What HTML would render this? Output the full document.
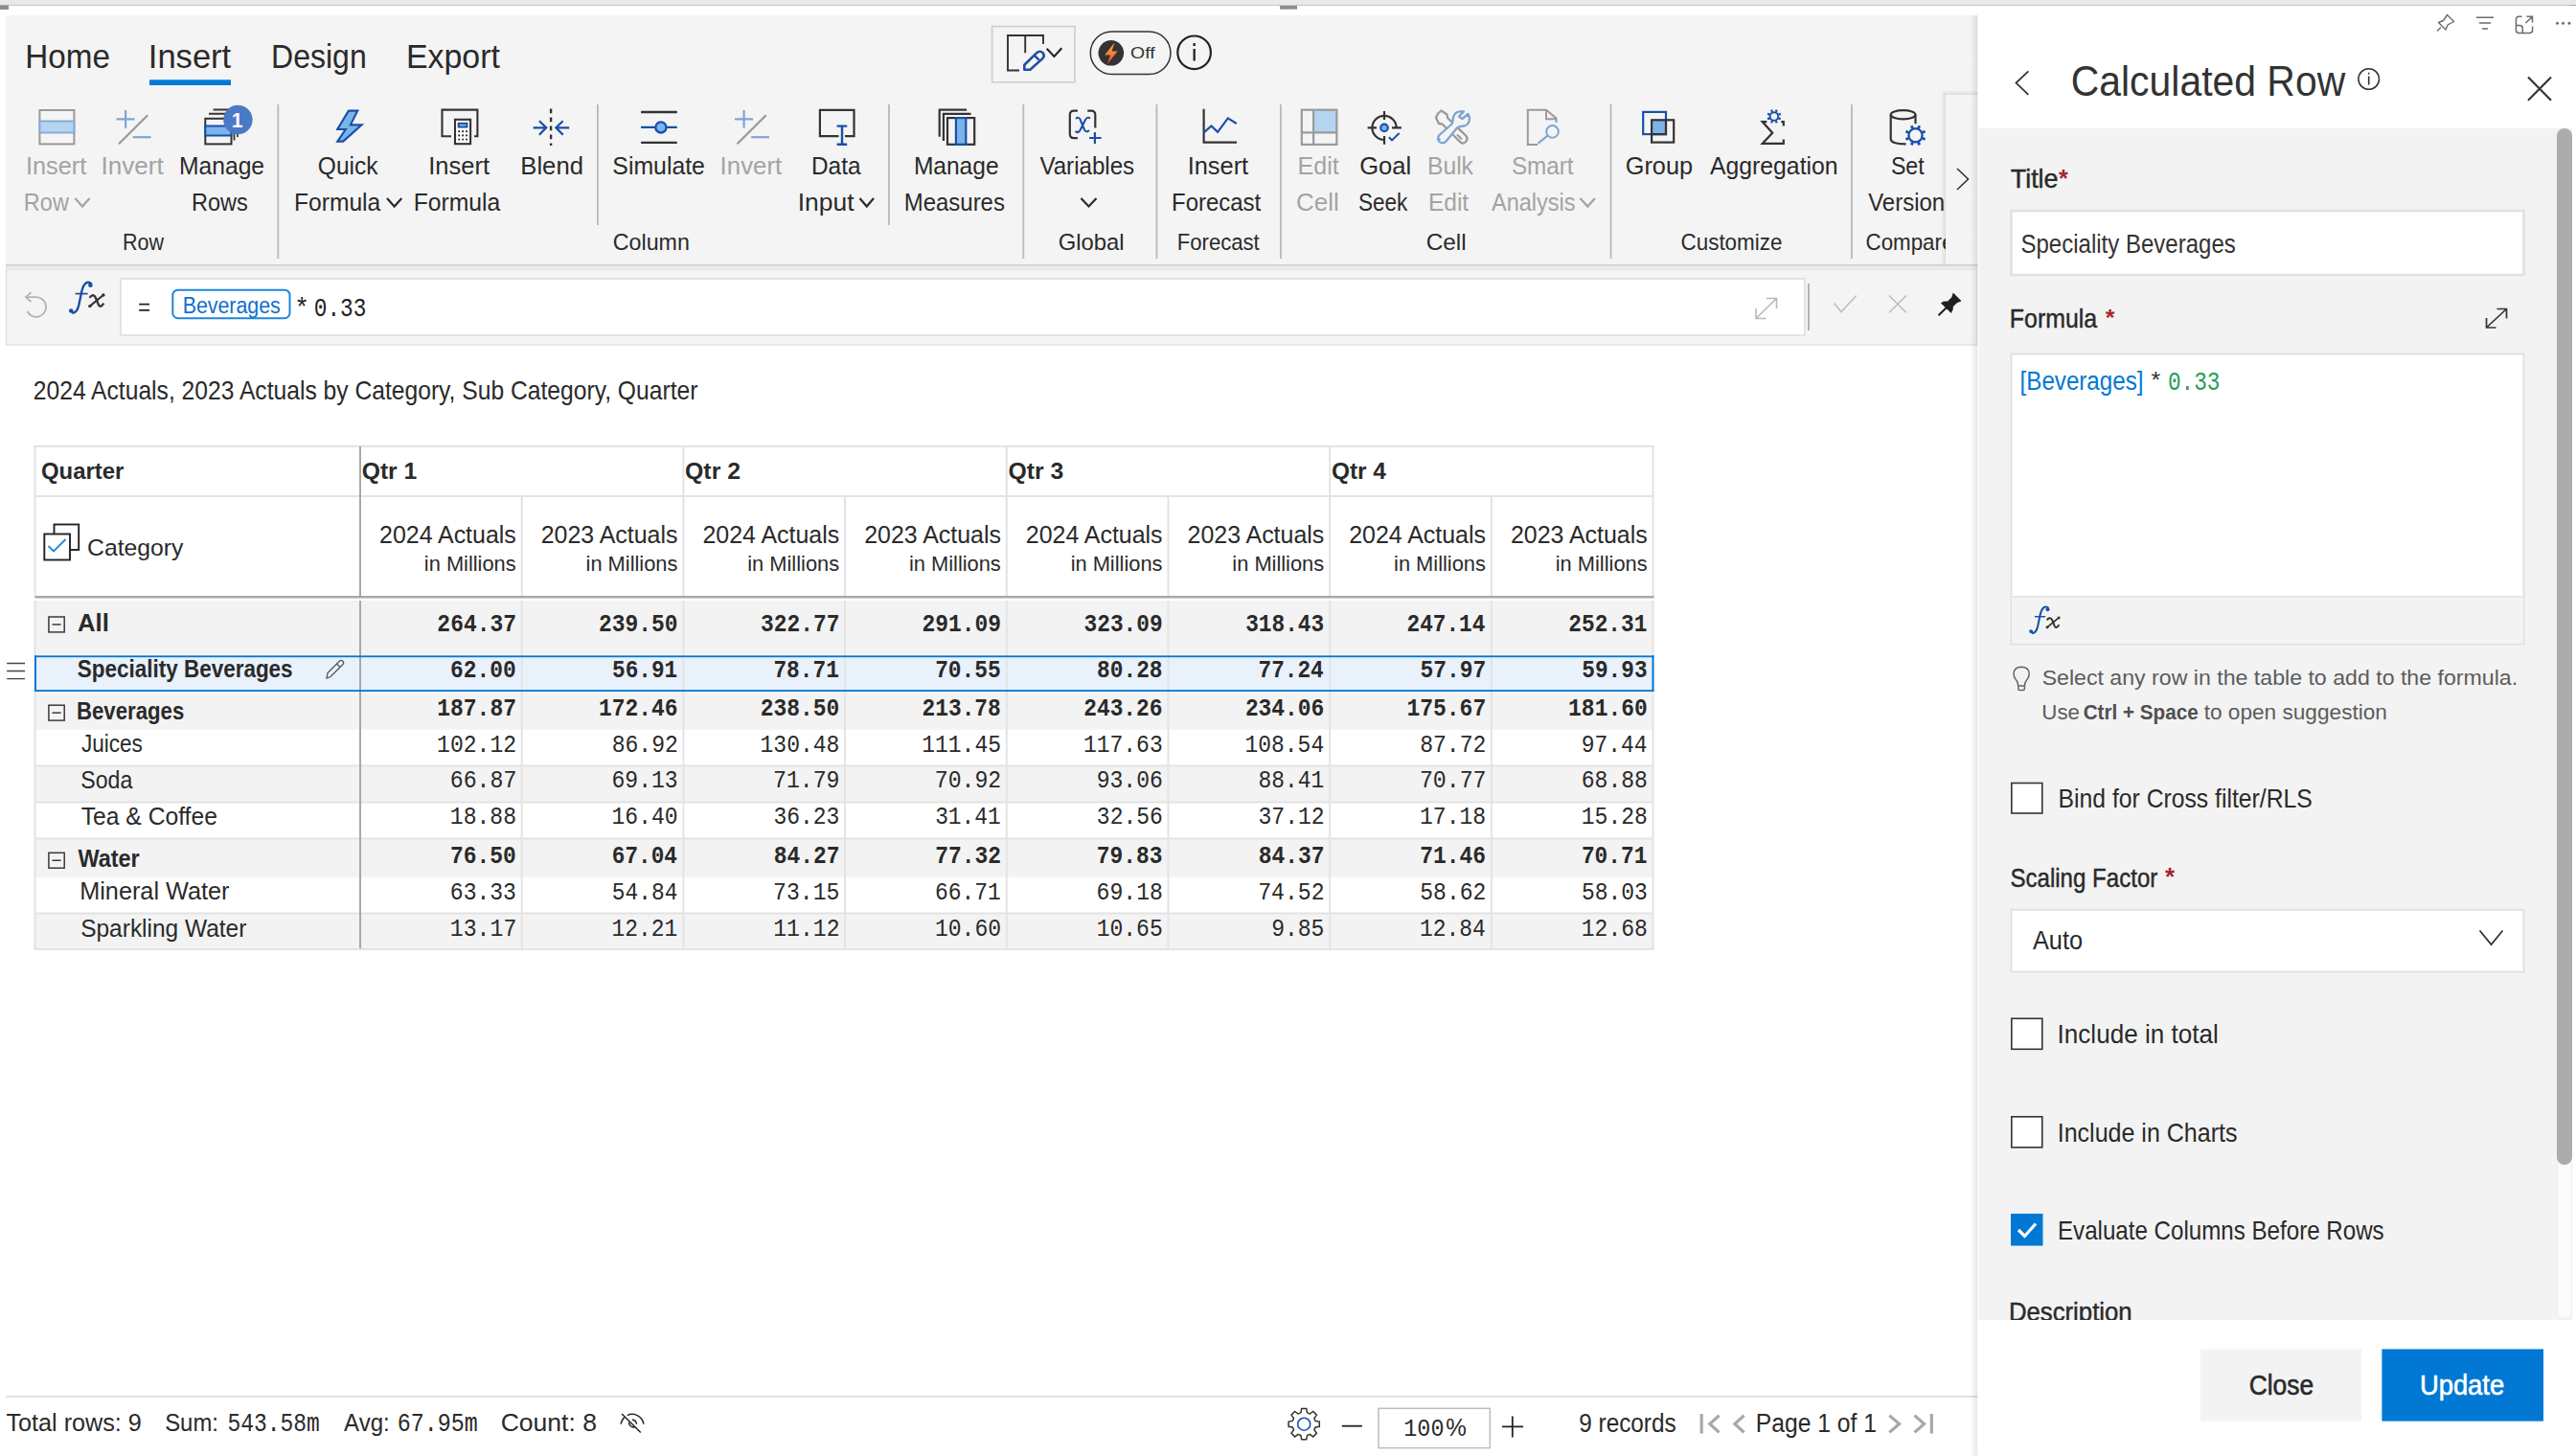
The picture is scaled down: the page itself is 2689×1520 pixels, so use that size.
<!DOCTYPE html>
<html><head><meta charset="utf-8"><title>Calculated Row</title>
<style>
html,body{margin:0;padding:0;background:#fff;overflow:hidden;}
body{width:2689px;height:1520px;font-family:"Liberation Sans",sans-serif;}
svg{display:block;position:absolute;left:0;top:0;}
text{white-space:pre;}
</style></head><body>
<svg width="2689" height="1520" viewBox="0 0 2689 1520">
<rect x="0" y="0" width="2689" height="1520" fill="#ffffff" />
<rect x="0" y="0" width="2689" height="5.5" fill="#e9e9e9" />
<rect x="0" y="5" width="2689" height="1" fill="#c6c6c6" />
<rect x="0" y="5.5" width="9" height="4.5" fill="#8c8c8c" />
<rect x="1336" y="6" width="18" height="3.7" fill="#8c8c8c" />
<rect x="2682" y="5.5" width="7" height="1.5" fill="#8c8c8c" />
<rect x="6" y="16" width="2059" height="260" fill="#f4f4f4" />
<defs><linearGradient id="shd" x1="0" y1="0" x2="0" y2="1"><stop offset="0" stop-color="#c9c9c9"/><stop offset="1" stop-color="#ececec"/></linearGradient><linearGradient id="shl" x1="1" y1="0" x2="0" y2="0"><stop offset="0" stop-color="#000" stop-opacity="0.10"/><stop offset="1" stop-color="#000" stop-opacity="0"/></linearGradient><linearGradient id="bolt" x1="0" y1="0" x2="0" y2="1"><stop offset="0" stop-color="#ffb43c"/><stop offset="1" stop-color="#f0453a"/></linearGradient></defs>
<rect x="6" y="276" width="2059" height="3" fill="url(#shd)" />
<rect x="6" y="279" width="2059" height="2" fill="#efefef" />
<text x="26.27" y="71" font-family="Liberation Sans" font-size="35.32" font-weight="400" fill="#2a2a2a" textLength="88.71" lengthAdjust="spacingAndGlyphs" >Home</text>
<text x="154.81" y="71" font-family="Liberation Sans" font-size="35.32" font-weight="400" fill="#2a2a2a" textLength="86.44" lengthAdjust="spacingAndGlyphs" >Insert</text>
<text x="283.08" y="70.7" font-family="Liberation Sans" font-size="35.32" font-weight="400" fill="#2a2a2a" textLength="99.6" lengthAdjust="spacingAndGlyphs" >Design</text>
<text x="423.92" y="70.7" font-family="Liberation Sans" font-size="35.32" font-weight="400" fill="#2a2a2a" textLength="97.93" lengthAdjust="spacingAndGlyphs" >Export</text>
<rect x="156" y="83.3" width="85" height="5.7" fill="#0078d4" />
<rect x="1035.6" y="27.6" width="86.4" height="58.2" fill="none" stroke="#cdcdcd" stroke-width="1.6"/>
<path d="M1064 73.5 H1052 V37 H1089 V46 M1070.2 37 V55.3" fill="none" stroke="#333" stroke-width="1.9" />
<path d="M1069.3 72.7 V67.8 L1082 55.4 Q1085.5 52.2 1088.6 55.2 Q1091.2 58.3 1088 61.4 L1075.3 72.7 Z" fill="#f4f4f4" stroke="#1d4f9e" stroke-width="2.6" stroke-linejoin="round"/>
<path d="M1079.8 57.8 L1084.6 62.6" fill="none" stroke="#1d4f9e" stroke-width="2.4" />
<path d="M1092.7 50.8 L1100.4 58.9 L1108.3 50.3" fill="none" stroke="#262626" stroke-width="2.2" />
<rect x="1138.3" y="33" width="83.6" height="44.5" fill="none" rx="22.2" stroke="#333" stroke-width="1.5"/>
<circle cx="1159.8" cy="55.3" r="13.3" fill="#333" />
<path d="M1163.5 44.5 L1153 57.5 L1159 57.5 L1156 67 L1166.5 53.5 L1160.5 53.5 Z" fill="url(#bolt)" />
<text x="1180.09" y="60.9" font-family="Liberation Sans" font-size="15.99" font-weight="400" fill="#333" textLength="25.58" lengthAdjust="spacingAndGlyphs" >Off</text>
<circle cx="1246.6" cy="54.8" r="17.3" fill="none" stroke="#222" stroke-width="2.2" />
<rect x="1245.5" y="45" width="2.3" height="3" fill="#222" />
<rect x="1245.5" y="51" width="2.3" height="12.5" fill="#222" />
<rect x="289.4" y="109" width="1.8" height="161" fill="#b9b9b9" />
<rect x="623" y="109" width="1.8" height="126" fill="#b9b9b9" />
<rect x="927" y="109" width="1.8" height="126" fill="#b9b9b9" />
<rect x="1067.4" y="109" width="1.8" height="161" fill="#b9b9b9" />
<rect x="1206.5" y="109" width="1.8" height="161" fill="#b9b9b9" />
<rect x="1336" y="109" width="1.8" height="161" fill="#b9b9b9" />
<rect x="1680.6" y="109" width="1.8" height="161" fill="#b9b9b9" />
<rect x="1932" y="109" width="1.8" height="161" fill="#b9b9b9" />
<text x="26.97" y="181.8" font-family="Liberation Sans" font-size="26.45" font-weight="400" fill="#a3a3a3" textLength="63.22" lengthAdjust="spacingAndGlyphs" >Insert</text>
<text x="24.87" y="219.7" font-family="Liberation Sans" font-size="26.45" font-weight="400" fill="#a3a3a3" textLength="47.07" lengthAdjust="spacingAndGlyphs" >Row</text>
<text x="105.59" y="181.8" font-family="Liberation Sans" font-size="26.45" font-weight="400" fill="#a3a3a3" textLength="65.2" lengthAdjust="spacingAndGlyphs" >Invert</text>
<text x="186.98" y="181.8" font-family="Liberation Sans" font-size="26.45" font-weight="400" fill="#2a2a2a" textLength="89.12" lengthAdjust="spacingAndGlyphs" >Manage</text>
<text x="200.07" y="219.7" font-family="Liberation Sans" font-size="26.45" font-weight="400" fill="#2a2a2a" textLength="58.78" lengthAdjust="spacingAndGlyphs" >Rows</text>
<text x="331.84" y="181.8" font-family="Liberation Sans" font-size="26.45" font-weight="400" fill="#2a2a2a" textLength="62.73" lengthAdjust="spacingAndGlyphs" >Quick</text>
<text x="306.98" y="219.7" font-family="Liberation Sans" font-size="26.45" font-weight="400" fill="#2a2a2a" textLength="90.32" lengthAdjust="spacingAndGlyphs" >Formula</text>
<text x="447.25" y="181.8" font-family="Liberation Sans" font-size="26.45" font-weight="400" fill="#2a2a2a" textLength="63.74" lengthAdjust="spacingAndGlyphs" >Insert</text>
<text x="431.67" y="219.7" font-family="Liberation Sans" font-size="26.45" font-weight="400" fill="#2a2a2a" textLength="90.63" lengthAdjust="spacingAndGlyphs" >Formula</text>
<text x="543.29" y="181.8" font-family="Liberation Sans" font-size="26.45" font-weight="400" fill="#2a2a2a" textLength="65.66" lengthAdjust="spacingAndGlyphs" >Blend</text>
<text x="639.37" y="181.8" font-family="Liberation Sans" font-size="26.45" font-weight="400" fill="#2a2a2a" textLength="96.53" lengthAdjust="spacingAndGlyphs" >Simulate</text>
<text x="751.62" y="181.8" font-family="Liberation Sans" font-size="26.45" font-weight="400" fill="#a3a3a3" textLength="64.57" lengthAdjust="spacingAndGlyphs" >Invert</text>
<text x="847" y="181.8" font-family="Liberation Sans" font-size="26.45" font-weight="400" fill="#2a2a2a" textLength="51.5" lengthAdjust="spacingAndGlyphs" >Data</text>
<text x="832.76" y="219.7" font-family="Liberation Sans" font-size="26.45" font-weight="400" fill="#2a2a2a" textLength="58.73" lengthAdjust="spacingAndGlyphs" >Input</text>
<text x="953.89" y="181.8" font-family="Liberation Sans" font-size="26.45" font-weight="400" fill="#2a2a2a" textLength="88.7" lengthAdjust="spacingAndGlyphs" >Manage</text>
<text x="943.84" y="219.7" font-family="Liberation Sans" font-size="26.45" font-weight="400" fill="#2a2a2a" textLength="105.03" lengthAdjust="spacingAndGlyphs" >Measures</text>
<text x="1085.4" y="181.8" font-family="Liberation Sans" font-size="26.45" font-weight="400" fill="#2a2a2a" textLength="98.76" lengthAdjust="spacingAndGlyphs" >Variables</text>
<text x="1239.66" y="181.8" font-family="Liberation Sans" font-size="26.45" font-weight="400" fill="#2a2a2a" textLength="63.53" lengthAdjust="spacingAndGlyphs" >Insert</text>
<text x="1223.04" y="219.7" font-family="Liberation Sans" font-size="26.45" font-weight="400" fill="#2a2a2a" textLength="93.14" lengthAdjust="spacingAndGlyphs" >Forecast</text>
<text x="1354.55" y="181.8" font-family="Liberation Sans" font-size="26.45" font-weight="400" fill="#a3a3a3" textLength="43.14" lengthAdjust="spacingAndGlyphs" >Edit</text>
<text x="1353.08" y="219.7" font-family="Liberation Sans" font-size="26.45" font-weight="400" fill="#a3a3a3" textLength="44.65" lengthAdjust="spacingAndGlyphs" >Cell</text>
<text x="1419.21" y="181.8" font-family="Liberation Sans" font-size="26.45" font-weight="400" fill="#2a2a2a" textLength="54" lengthAdjust="spacingAndGlyphs" >Goal</text>
<text x="1417.98" y="219.7" font-family="Liberation Sans" font-size="26.45" font-weight="400" fill="#2a2a2a" textLength="51.29" lengthAdjust="spacingAndGlyphs" >Seek</text>
<text x="1489.98" y="181.8" font-family="Liberation Sans" font-size="26.45" font-weight="400" fill="#a3a3a3" textLength="47.99" lengthAdjust="spacingAndGlyphs" >Bulk</text>
<text x="1490.99" y="219.7" font-family="Liberation Sans" font-size="26.45" font-weight="400" fill="#a3a3a3" textLength="42.19" lengthAdjust="spacingAndGlyphs" >Edit</text>
<text x="1577.9" y="181.8" font-family="Liberation Sans" font-size="26.45" font-weight="400" fill="#a3a3a3" textLength="64.68" lengthAdjust="spacingAndGlyphs" >Smart</text>
<text x="1556.95" y="219.7" font-family="Liberation Sans" font-size="26.45" font-weight="400" fill="#a3a3a3" textLength="87.7" lengthAdjust="spacingAndGlyphs" >Analysis</text>
<text x="1696.73" y="181.8" font-family="Liberation Sans" font-size="26.45" font-weight="400" fill="#2a2a2a" textLength="70.34" lengthAdjust="spacingAndGlyphs" >Group</text>
<text x="1784.95" y="181.8" font-family="Liberation Sans" font-size="26.45" font-weight="400" fill="#2a2a2a" textLength="133.66" lengthAdjust="spacingAndGlyphs" >Aggregation</text>
<text x="1973.95" y="181.8" font-family="Liberation Sans" font-size="26.45" font-weight="400" fill="#2a2a2a" textLength="34.72" lengthAdjust="spacingAndGlyphs" >Set</text>
<clipPath id="rclip"><rect x="6" y="16" width="2025" height="260"/></clipPath>
<g clip-path="url(#rclip)">
<text x="1950.2" y="219.7" font-family="Liberation Sans" font-size="26.45" font-weight="400" fill="#2a2a2a" textLength="79.93" lengthAdjust="spacingAndGlyphs" >Version</text>
<text x="1947.57" y="261" font-family="Liberation Sans" font-size="23.84" font-weight="400" fill="#2a2a2a" textLength="79.4" lengthAdjust="spacingAndGlyphs" >Compar</text>
<text x="2027.13" y="261" font-family="Liberation Sans" font-size="23.84" font-weight="400" fill="#2a2a2a" textLength="13.99" lengthAdjust="spacingAndGlyphs" >e</text>
</g>
<path d="M78.5 207 L86 215.5 L93.5 207" fill="none" stroke="#a3a3a3" stroke-width="2.2" />
<path d="M404 207 L411.65 215.5 L419.3 207" fill="none" stroke="#2a2a2a" stroke-width="2.2" />
<path d="M897.5 207 L904.75 215.5 L912 207" fill="none" stroke="#2a2a2a" stroke-width="2.2" />
<path d="M1128.5 207 L1136.5 215.5 L1144.5 207" fill="none" stroke="#2a2a2a" stroke-width="2.2" />
<path d="M1649.5 207 L1657.25 215.5 L1665 207" fill="none" stroke="#a3a3a3" stroke-width="2.2" />
<text x="128.04" y="261" font-family="Liberation Sans" font-size="23.84" font-weight="400" fill="#2a2a2a" textLength="42.91" lengthAdjust="spacingAndGlyphs" >Row</text>
<text x="639.82" y="261" font-family="Liberation Sans" font-size="23.84" font-weight="400" fill="#2a2a2a" textLength="79.99" lengthAdjust="spacingAndGlyphs" >Column</text>
<text x="1104.8" y="261" font-family="Liberation Sans" font-size="23.84" font-weight="400" fill="#2a2a2a" textLength="68.79" lengthAdjust="spacingAndGlyphs" >Global</text>
<text x="1228.79" y="261" font-family="Liberation Sans" font-size="23.84" font-weight="400" fill="#2a2a2a" textLength="85.97" lengthAdjust="spacingAndGlyphs" >Forecast</text>
<text x="1488.77" y="261" font-family="Liberation Sans" font-size="23.84" font-weight="400" fill="#2a2a2a" textLength="41.86" lengthAdjust="spacingAndGlyphs" >Cell</text>
<text x="1754.56" y="261" font-family="Liberation Sans" font-size="23.84" font-weight="400" fill="#2a2a2a" textLength="105.83" lengthAdjust="spacingAndGlyphs" >Customize</text>
<rect x="2026" y="99" width="5" height="177" fill="url(#shl)" />
<linearGradient id="sht" x1="0" y1="1" x2="0" y2="0"><stop offset="0" stop-color="#000" stop-opacity="0.10"/><stop offset="1" stop-color="#000" stop-opacity="0"/></linearGradient>
<rect x="2028" y="94" width="37" height="5" fill="url(#sht)" />
<rect x="2031" y="99" width="34" height="177" fill="#f4f4f4" />
<path d="M2043 176 L2054.5 187 L2043 198" fill="none" stroke="#333" stroke-width="1.6" />
<rect x="6.5" y="281" width="2057.5" height="79" fill="#f4f4f4" stroke="#e2e2e2" stroke-width="1.5"/>
<rect x="126" y="291" width="1758" height="59" fill="#ffffff" stroke="#e3e3e3" stroke-width="2"/>
<rect x="1887" y="296" width="2" height="49" fill="#b3b3b3" />
<text x="34.77" y="417" font-family="Liberation Sans" font-size="27.91" font-weight="400" fill="#2a2a2a" textLength="693.63" lengthAdjust="spacingAndGlyphs" >2024 Actuals, 2023 Actuals by Category, Sub Category, Quarter</text>
<rect x="36.5" y="466" width="1690" height="157" fill="#ffffff" />
<rect x="35.5" y="465" width="1691" height="2" fill="#e3e3e3" />
<rect x="35.5" y="465" width="2" height="159" fill="#e3e3e3" />
<rect x="1724.5" y="465" width="2" height="159" fill="#e3e3e3" />
<rect x="36.5" y="517" width="1690" height="2" fill="#e3e3e3" />
<rect x="36.5" y="622" width="1690" height="2.5" fill="#a8a8a8" />
<rect x="375" y="466" width="2" height="158" fill="#a8a8a8" />
<rect x="543.7" y="518" width="2" height="104" fill="#e3e3e3" />
<rect x="712.4" y="466" width="2" height="156" fill="#e3e3e3" />
<rect x="881.1" y="518" width="2" height="104" fill="#e3e3e3" />
<rect x="1049.8" y="466" width="2" height="156" fill="#e3e3e3" />
<rect x="1218.5" y="518" width="2" height="104" fill="#e3e3e3" />
<rect x="1387.2" y="466" width="2" height="156" fill="#e3e3e3" />
<rect x="1555.9" y="518" width="2" height="104" fill="#e3e3e3" />
<rect x="35.5" y="627" width="1691" height="365" fill="#e3e3e3" />
<rect x="37.5" y="627" width="1687" height="57.4" fill="#f3f3f3" />
<rect x="37.5" y="684.4" width="1687" height="37.6" fill="#e9f1fb" />
<rect x="37.5" y="722" width="1687" height="39.5" fill="#f3f3f3" />
<rect x="37.5" y="761.5" width="1687" height="37" fill="#ffffff" />
<rect x="37.5" y="800.5" width="1687" height="36" fill="#f3f3f3" />
<rect x="37.5" y="838.5" width="1687" height="36" fill="#ffffff" />
<rect x="37.5" y="876.5" width="1687" height="39" fill="#f3f3f3" />
<rect x="37.5" y="915.5" width="1687" height="37" fill="#ffffff" />
<rect x="37.5" y="954.5" width="1687" height="35.5" fill="#f3f3f3" />
<rect x="543.7" y="627" width="2" height="363" fill="#e4e4e4" />
<rect x="712.4" y="627" width="2" height="363" fill="#e4e4e4" />
<rect x="881.1" y="627" width="2" height="363" fill="#e4e4e4" />
<rect x="1049.8" y="627" width="2" height="363" fill="#e4e4e4" />
<rect x="1218.5" y="627" width="2" height="363" fill="#e4e4e4" />
<rect x="1387.2" y="627" width="2" height="363" fill="#e4e4e4" />
<rect x="1555.9" y="627" width="2" height="363" fill="#e4e4e4" />
<rect x="375" y="627" width="2" height="363" fill="#a8a8a8" />
<rect x="36" y="684.4" width="1690.5" height="1.8" fill="#0078d4" />
<rect x="36" y="720.2" width="1690.5" height="1.8" fill="#0078d4" />
<rect x="36" y="684.4" width="2" height="37.6" fill="#0078d4" />
<rect x="1724.5" y="684.4" width="2" height="37.6" fill="#0078d4" />
<text x="43.02" y="500" font-family="Liberation Sans" font-size="24.71" font-weight="700" fill="#2a2a2a" textLength="86.34" lengthAdjust="spacingAndGlyphs" >Quarter</text>
<text x="91.04" y="579.6" font-family="Liberation Sans" font-size="24.71" font-weight="400" fill="#2a2a2a" textLength="100.4" lengthAdjust="spacingAndGlyphs" >Category</text>
<text x="377.69" y="500" font-family="Liberation Sans" font-size="24.71" font-weight="700" fill="#2a2a2a" textLength="57.6" lengthAdjust="spacingAndGlyphs" >Qtr 1</text>
<text x="715.08" y="500" font-family="Liberation Sans" font-size="24.71" font-weight="700" fill="#2a2a2a" textLength="57.91" lengthAdjust="spacingAndGlyphs" >Qtr 2</text>
<text x="1052.48" y="500" font-family="Liberation Sans" font-size="24.71" font-weight="700" fill="#2a2a2a" textLength="57.81" lengthAdjust="spacingAndGlyphs" >Qtr 3</text>
<text x="1389.9" y="500" font-family="Liberation Sans" font-size="24.71" font-weight="700" fill="#2a2a2a" textLength="57.03" lengthAdjust="spacingAndGlyphs" >Qtr 4</text>
<text x="396.06" y="566.5" font-family="Liberation Sans" font-size="25.58" font-weight="400" fill="#2a2a2a" textLength="142.73" lengthAdjust="spacingAndGlyphs" >2024 Actuals</text>
<text x="442.84" y="595.8" font-family="Liberation Sans" font-size="22.67" font-weight="400" fill="#2a2a2a" textLength="95.85" lengthAdjust="spacingAndGlyphs" >in Millions</text>
<text x="564.76" y="566.5" font-family="Liberation Sans" font-size="25.58" font-weight="400" fill="#2a2a2a" textLength="142.73" lengthAdjust="spacingAndGlyphs" >2023 Actuals</text>
<text x="611.54" y="595.8" font-family="Liberation Sans" font-size="22.67" font-weight="400" fill="#2a2a2a" textLength="95.85" lengthAdjust="spacingAndGlyphs" >in Millions</text>
<text x="733.46" y="566.5" font-family="Liberation Sans" font-size="25.58" font-weight="400" fill="#2a2a2a" textLength="142.73" lengthAdjust="spacingAndGlyphs" >2024 Actuals</text>
<text x="780.24" y="595.8" font-family="Liberation Sans" font-size="22.67" font-weight="400" fill="#2a2a2a" textLength="95.85" lengthAdjust="spacingAndGlyphs" >in Millions</text>
<text x="902.16" y="566.5" font-family="Liberation Sans" font-size="25.58" font-weight="400" fill="#2a2a2a" textLength="142.73" lengthAdjust="spacingAndGlyphs" >2023 Actuals</text>
<text x="948.94" y="595.8" font-family="Liberation Sans" font-size="22.67" font-weight="400" fill="#2a2a2a" textLength="95.85" lengthAdjust="spacingAndGlyphs" >in Millions</text>
<text x="1070.86" y="566.5" font-family="Liberation Sans" font-size="25.58" font-weight="400" fill="#2a2a2a" textLength="142.73" lengthAdjust="spacingAndGlyphs" >2024 Actuals</text>
<text x="1117.64" y="595.8" font-family="Liberation Sans" font-size="22.67" font-weight="400" fill="#2a2a2a" textLength="95.85" lengthAdjust="spacingAndGlyphs" >in Millions</text>
<text x="1239.56" y="566.5" font-family="Liberation Sans" font-size="25.58" font-weight="400" fill="#2a2a2a" textLength="142.73" lengthAdjust="spacingAndGlyphs" >2023 Actuals</text>
<text x="1286.34" y="595.8" font-family="Liberation Sans" font-size="22.67" font-weight="400" fill="#2a2a2a" textLength="95.85" lengthAdjust="spacingAndGlyphs" >in Millions</text>
<text x="1408.26" y="566.5" font-family="Liberation Sans" font-size="25.58" font-weight="400" fill="#2a2a2a" textLength="142.73" lengthAdjust="spacingAndGlyphs" >2024 Actuals</text>
<text x="1455.04" y="595.8" font-family="Liberation Sans" font-size="22.67" font-weight="400" fill="#2a2a2a" textLength="95.85" lengthAdjust="spacingAndGlyphs" >in Millions</text>
<text x="1576.96" y="566.5" font-family="Liberation Sans" font-size="25.58" font-weight="400" fill="#2a2a2a" textLength="142.73" lengthAdjust="spacingAndGlyphs" >2023 Actuals</text>
<text x="1623.74" y="595.8" font-family="Liberation Sans" font-size="22.67" font-weight="400" fill="#2a2a2a" textLength="95.85" lengthAdjust="spacingAndGlyphs" >in Millions</text>
<text x="80.96" y="659" font-family="Liberation Sans" font-size="26.16" font-weight="700" fill="#2a2a2a" textLength="32.86" lengthAdjust="spacingAndGlyphs" >All</text>
<text x="456.37" y="658.6" font-family="Liberation Mono" font-size="26.56" font-weight="700" fill="#2a2a2a" textLength="82.66" lengthAdjust="spacingAndGlyphs" >264.37</text>
<text x="625.07" y="658.6" font-family="Liberation Mono" font-size="26.56" font-weight="700" fill="#2a2a2a" textLength="82.44" lengthAdjust="spacingAndGlyphs" >239.50</text>
<text x="794.11" y="658.6" font-family="Liberation Mono" font-size="26.56" font-weight="700" fill="#2a2a2a" textLength="82.32" lengthAdjust="spacingAndGlyphs" >322.77</text>
<text x="962.47" y="658.6" font-family="Liberation Mono" font-size="26.56" font-weight="700" fill="#2a2a2a" textLength="82.5" lengthAdjust="spacingAndGlyphs" >291.09</text>
<text x="1131.51" y="658.6" font-family="Liberation Mono" font-size="26.56" font-weight="700" fill="#2a2a2a" textLength="82.16" lengthAdjust="spacingAndGlyphs" >323.09</text>
<text x="1300.22" y="658.6" font-family="Liberation Mono" font-size="26.56" font-weight="700" fill="#2a2a2a" textLength="81.94" lengthAdjust="spacingAndGlyphs" >318.43</text>
<text x="1468.59" y="658.6" font-family="Liberation Mono" font-size="26.56" font-weight="700" fill="#2a2a2a" textLength="81.79" lengthAdjust="spacingAndGlyphs" >247.14</text>
<text x="1637.28" y="658.6" font-family="Liberation Mono" font-size="26.56" font-weight="700" fill="#2a2a2a" textLength="82.09" lengthAdjust="spacingAndGlyphs" >252.31</text>
<text x="80.75" y="707" font-family="Liberation Sans" font-size="25.29" font-weight="700" fill="#2a2a2a" textLength="224.87" lengthAdjust="spacingAndGlyphs" >Speciality Beverages</text>
<text x="470.1" y="707" font-family="Liberation Mono" font-size="26.56" font-weight="700" fill="#2a2a2a" textLength="68.72" lengthAdjust="spacingAndGlyphs" >62.00</text>
<text x="639.05" y="707" font-family="Liberation Mono" font-size="26.56" font-weight="700" fill="#2a2a2a" textLength="68.12" lengthAdjust="spacingAndGlyphs" >56.91</text>
<text x="807.44" y="707" font-family="Liberation Mono" font-size="26.56" font-weight="700" fill="#2a2a2a" textLength="68.43" lengthAdjust="spacingAndGlyphs" >78.71</text>
<text x="976.14" y="707" font-family="Liberation Mono" font-size="26.56" font-weight="700" fill="#2a2a2a" textLength="68.65" lengthAdjust="spacingAndGlyphs" >70.55</text>
<text x="1145.09" y="707" font-family="Liberation Mono" font-size="26.56" font-weight="700" fill="#2a2a2a" textLength="68.43" lengthAdjust="spacingAndGlyphs" >80.28</text>
<text x="1313.55" y="707" font-family="Liberation Mono" font-size="26.56" font-weight="700" fill="#2a2a2a" textLength="68.13" lengthAdjust="spacingAndGlyphs" >77.24</text>
<text x="1482.54" y="707" font-family="Liberation Mono" font-size="26.56" font-weight="700" fill="#2a2a2a" textLength="68.69" lengthAdjust="spacingAndGlyphs" >57.97</text>
<text x="1651.24" y="707" font-family="Liberation Mono" font-size="26.56" font-weight="700" fill="#2a2a2a" textLength="68.31" lengthAdjust="spacingAndGlyphs" >59.93</text>
<text x="79.91" y="751" font-family="Liberation Sans" font-size="25.58" font-weight="700" fill="#2a2a2a" textLength="112.4" lengthAdjust="spacingAndGlyphs" >Beverages</text>
<text x="456.2" y="746.8" font-family="Liberation Mono" font-size="26.56" font-weight="700" fill="#2a2a2a" textLength="82.84" lengthAdjust="spacingAndGlyphs" >187.87</text>
<text x="624.9" y="746.8" font-family="Liberation Mono" font-size="26.56" font-weight="700" fill="#2a2a2a" textLength="82.57" lengthAdjust="spacingAndGlyphs" >172.46</text>
<text x="793.77" y="746.8" font-family="Liberation Mono" font-size="26.56" font-weight="700" fill="#2a2a2a" textLength="82.44" lengthAdjust="spacingAndGlyphs" >238.50</text>
<text x="962.48" y="746.8" font-family="Liberation Mono" font-size="26.56" font-weight="700" fill="#2a2a2a" textLength="82.34" lengthAdjust="spacingAndGlyphs" >213.78</text>
<text x="1131.18" y="746.8" font-family="Liberation Mono" font-size="26.56" font-weight="700" fill="#2a2a2a" textLength="82.4" lengthAdjust="spacingAndGlyphs" >243.26</text>
<text x="1299.88" y="746.8" font-family="Liberation Mono" font-size="26.56" font-weight="700" fill="#2a2a2a" textLength="82.4" lengthAdjust="spacingAndGlyphs" >234.06</text>
<text x="1468.4" y="746.8" font-family="Liberation Mono" font-size="26.56" font-weight="700" fill="#2a2a2a" textLength="82.84" lengthAdjust="spacingAndGlyphs" >175.67</text>
<text x="1637.1" y="746.8" font-family="Liberation Mono" font-size="26.56" font-weight="700" fill="#2a2a2a" textLength="82.62" lengthAdjust="spacingAndGlyphs" >181.60</text>
<text x="84.95" y="785" font-family="Liberation Sans" font-size="25.29" font-weight="400" fill="#2a2a2a" textLength="63.87" lengthAdjust="spacingAndGlyphs" >Juices</text>
<text x="456.08" y="785.3" font-family="Liberation Mono" font-size="26.56" font-weight="400" fill="#2a2a2a" textLength="83.05" lengthAdjust="spacingAndGlyphs" >102.12</text>
<text x="638.7" y="785.3" font-family="Liberation Mono" font-size="26.56" font-weight="400" fill="#2a2a2a" textLength="69.13" lengthAdjust="spacingAndGlyphs" >86.92</text>
<text x="793.49" y="785.3" font-family="Liberation Mono" font-size="26.56" font-weight="400" fill="#2a2a2a" textLength="82.93" lengthAdjust="spacingAndGlyphs" >130.48</text>
<text x="962.19" y="785.3" font-family="Liberation Mono" font-size="26.56" font-weight="400" fill="#2a2a2a" textLength="82.87" lengthAdjust="spacingAndGlyphs" >111.45</text>
<text x="1130.89" y="785.3" font-family="Liberation Mono" font-size="26.56" font-weight="400" fill="#2a2a2a" textLength="82.87" lengthAdjust="spacingAndGlyphs" >117.63</text>
<text x="1299.59" y="785.3" font-family="Liberation Mono" font-size="26.56" font-weight="400" fill="#2a2a2a" textLength="82.57" lengthAdjust="spacingAndGlyphs" >108.54</text>
<text x="1482.2" y="785.3" font-family="Liberation Mono" font-size="26.56" font-weight="400" fill="#2a2a2a" textLength="69.13" lengthAdjust="spacingAndGlyphs" >87.72</text>
<text x="1650.82" y="785.3" font-family="Liberation Mono" font-size="26.56" font-weight="400" fill="#2a2a2a" textLength="68.74" lengthAdjust="spacingAndGlyphs" >97.44</text>
<text x="84.25" y="823.2" font-family="Liberation Sans" font-size="25.29" font-weight="400" fill="#2a2a2a" textLength="54.05" lengthAdjust="spacingAndGlyphs" >Soda</text>
<text x="469.79" y="822" font-family="Liberation Mono" font-size="26.56" font-weight="400" fill="#2a2a2a" textLength="69.52" lengthAdjust="spacingAndGlyphs" >66.87</text>
<text x="638.5" y="822" font-family="Liberation Mono" font-size="26.56" font-weight="400" fill="#2a2a2a" textLength="69.16" lengthAdjust="spacingAndGlyphs" >69.13</text>
<text x="807.12" y="822" font-family="Liberation Mono" font-size="26.56" font-weight="400" fill="#2a2a2a" textLength="69.39" lengthAdjust="spacingAndGlyphs" >71.79</text>
<text x="975.81" y="822" font-family="Liberation Mono" font-size="26.56" font-weight="400" fill="#2a2a2a" textLength="69.42" lengthAdjust="spacingAndGlyphs" >70.92</text>
<text x="1144.71" y="822" font-family="Liberation Mono" font-size="26.56" font-weight="400" fill="#2a2a2a" textLength="69.08" lengthAdjust="spacingAndGlyphs" >93.06</text>
<text x="1313.52" y="822" font-family="Liberation Mono" font-size="26.56" font-weight="400" fill="#2a2a2a" textLength="68.59" lengthAdjust="spacingAndGlyphs" >88.41</text>
<text x="1481.91" y="822" font-family="Liberation Mono" font-size="26.56" font-weight="400" fill="#2a2a2a" textLength="69.6" lengthAdjust="spacingAndGlyphs" >70.77</text>
<text x="1650.7" y="822" font-family="Liberation Mono" font-size="26.56" font-weight="400" fill="#2a2a2a" textLength="69.22" lengthAdjust="spacingAndGlyphs" >68.88</text>
<text x="84.76" y="861.4" font-family="Liberation Sans" font-size="25.29" font-weight="400" fill="#2a2a2a" textLength="142.11" lengthAdjust="spacingAndGlyphs" >Tea &amp; Coffee</text>
<text x="469.83" y="860" font-family="Liberation Mono" font-size="26.56" font-weight="400" fill="#2a2a2a" textLength="69.19" lengthAdjust="spacingAndGlyphs" >18.88</text>
<text x="638.54" y="860" font-family="Liberation Mono" font-size="26.56" font-weight="400" fill="#2a2a2a" textLength="69.08" lengthAdjust="spacingAndGlyphs" >16.40</text>
<text x="807.46" y="860" font-family="Liberation Mono" font-size="26.56" font-weight="400" fill="#2a2a2a" textLength="68.89" lengthAdjust="spacingAndGlyphs" >36.23</text>
<text x="976.17" y="860" font-family="Liberation Mono" font-size="26.56" font-weight="400" fill="#2a2a2a" textLength="68.53" lengthAdjust="spacingAndGlyphs" >31.41</text>
<text x="1144.86" y="860" font-family="Liberation Mono" font-size="26.56" font-weight="400" fill="#2a2a2a" textLength="68.93" lengthAdjust="spacingAndGlyphs" >32.56</text>
<text x="1313.56" y="860" font-family="Liberation Mono" font-size="26.56" font-weight="400" fill="#2a2a2a" textLength="69.07" lengthAdjust="spacingAndGlyphs" >37.12</text>
<text x="1482.03" y="860" font-family="Liberation Mono" font-size="26.56" font-weight="400" fill="#2a2a2a" textLength="69.19" lengthAdjust="spacingAndGlyphs" >17.18</text>
<text x="1650.73" y="860" font-family="Liberation Mono" font-size="26.56" font-weight="400" fill="#2a2a2a" textLength="69.19" lengthAdjust="spacingAndGlyphs" >15.28</text>
<text x="81.38" y="904.7" font-family="Liberation Sans" font-size="25.29" font-weight="700" fill="#2a2a2a" textLength="64.27" lengthAdjust="spacingAndGlyphs" >Water</text>
<text x="470.03" y="900.5" font-family="Liberation Mono" font-size="26.56" font-weight="700" fill="#2a2a2a" textLength="68.79" lengthAdjust="spacingAndGlyphs" >76.50</text>
<text x="638.82" y="900.5" font-family="Liberation Mono" font-size="26.56" font-weight="700" fill="#2a2a2a" textLength="68.06" lengthAdjust="spacingAndGlyphs" >67.04</text>
<text x="807.68" y="900.5" font-family="Liberation Mono" font-size="26.56" font-weight="700" fill="#2a2a2a" textLength="68.75" lengthAdjust="spacingAndGlyphs" >84.27</text>
<text x="976.13" y="900.5" font-family="Liberation Mono" font-size="26.56" font-weight="700" fill="#2a2a2a" textLength="68.81" lengthAdjust="spacingAndGlyphs" >77.32</text>
<text x="1144.84" y="900.5" font-family="Liberation Mono" font-size="26.56" font-weight="700" fill="#2a2a2a" textLength="68.62" lengthAdjust="spacingAndGlyphs" >79.83</text>
<text x="1313.78" y="900.5" font-family="Liberation Mono" font-size="26.56" font-weight="700" fill="#2a2a2a" textLength="68.75" lengthAdjust="spacingAndGlyphs" >84.37</text>
<text x="1482.23" y="900.5" font-family="Liberation Mono" font-size="26.56" font-weight="700" fill="#2a2a2a" textLength="68.74" lengthAdjust="spacingAndGlyphs" >71.46</text>
<text x="1650.94" y="900.5" font-family="Liberation Mono" font-size="26.56" font-weight="700" fill="#2a2a2a" textLength="68.43" lengthAdjust="spacingAndGlyphs" >70.71</text>
<text x="83.24" y="939.4" font-family="Liberation Sans" font-size="25.29" font-weight="400" fill="#2a2a2a" textLength="156.18" lengthAdjust="spacingAndGlyphs" >Mineral Water</text>
<text x="469.8" y="938.8" font-family="Liberation Mono" font-size="26.56" font-weight="400" fill="#2a2a2a" textLength="69.16" lengthAdjust="spacingAndGlyphs" >63.33</text>
<text x="638.77" y="938.8" font-family="Liberation Mono" font-size="26.56" font-weight="400" fill="#2a2a2a" textLength="68.59" lengthAdjust="spacingAndGlyphs" >54.84</text>
<text x="807.12" y="938.8" font-family="Liberation Mono" font-size="26.56" font-weight="400" fill="#2a2a2a" textLength="69.25" lengthAdjust="spacingAndGlyphs" >73.15</text>
<text x="975.91" y="938.8" font-family="Liberation Mono" font-size="26.56" font-weight="400" fill="#2a2a2a" textLength="68.8" lengthAdjust="spacingAndGlyphs" >66.71</text>
<text x="1144.6" y="938.8" font-family="Liberation Mono" font-size="26.56" font-weight="400" fill="#2a2a2a" textLength="69.22" lengthAdjust="spacingAndGlyphs" >69.18</text>
<text x="1313.21" y="938.8" font-family="Liberation Mono" font-size="26.56" font-weight="400" fill="#2a2a2a" textLength="69.42" lengthAdjust="spacingAndGlyphs" >74.52</text>
<text x="1482.26" y="938.8" font-family="Liberation Mono" font-size="26.56" font-weight="400" fill="#2a2a2a" textLength="69.07" lengthAdjust="spacingAndGlyphs" >58.62</text>
<text x="1650.96" y="938.8" font-family="Liberation Mono" font-size="26.56" font-weight="400" fill="#2a2a2a" textLength="68.89" lengthAdjust="spacingAndGlyphs" >58.03</text>
<text x="84.19" y="977.6" font-family="Liberation Sans" font-size="25.29" font-weight="400" fill="#2a2a2a" textLength="173.21" lengthAdjust="spacingAndGlyphs" >Sparkling Water</text>
<text x="469.83" y="977" font-family="Liberation Mono" font-size="26.56" font-weight="400" fill="#2a2a2a" textLength="69.48" lengthAdjust="spacingAndGlyphs" >13.17</text>
<text x="638.54" y="977" font-family="Liberation Mono" font-size="26.56" font-weight="400" fill="#2a2a2a" textLength="68.76" lengthAdjust="spacingAndGlyphs" >12.21</text>
<text x="807.23" y="977" font-family="Liberation Mono" font-size="26.56" font-weight="400" fill="#2a2a2a" textLength="69.3" lengthAdjust="spacingAndGlyphs" >11.12</text>
<text x="975.94" y="977" font-family="Liberation Mono" font-size="26.56" font-weight="400" fill="#2a2a2a" textLength="69.08" lengthAdjust="spacingAndGlyphs" >10.60</text>
<text x="1144.64" y="977" font-family="Liberation Mono" font-size="26.56" font-weight="400" fill="#2a2a2a" textLength="69.13" lengthAdjust="spacingAndGlyphs" >10.65</text>
<text x="1327.16" y="977" font-family="Liberation Mono" font-size="26.56" font-weight="400" fill="#2a2a2a" textLength="55.3" lengthAdjust="spacingAndGlyphs" >9.85</text>
<text x="1482.04" y="977" font-family="Liberation Mono" font-size="26.56" font-weight="400" fill="#2a2a2a" textLength="68.82" lengthAdjust="spacingAndGlyphs" >12.84</text>
<text x="1650.73" y="977" font-family="Liberation Mono" font-size="26.56" font-weight="400" fill="#2a2a2a" textLength="69.19" lengthAdjust="spacingAndGlyphs" >12.68</text>
<rect x="6" y="1457" width="2059" height="2" fill="#e1e1e1" />
<text x="6.45" y="1493.8" font-family="Liberation Sans" font-size="26.6" font-weight="400" fill="#2a2a2a" textLength="141.43" lengthAdjust="spacingAndGlyphs" >Total rows: 9</text>
<text x="172.22" y="1493.6" font-family="Liberation Sans" font-size="26.31" font-weight="400" fill="#2a2a2a" textLength="55.66" lengthAdjust="spacingAndGlyphs" >Sum:</text>
<text x="237.57" y="1493.6" font-family="Liberation Mono" font-size="27.31" font-weight="400" fill="#2a2a2a" textLength="96.21" lengthAdjust="spacingAndGlyphs" >543.58m</text>
<text x="359.05" y="1493.6" font-family="Liberation Sans" font-size="26.31" font-weight="400" fill="#2a2a2a" textLength="47.62" lengthAdjust="spacingAndGlyphs" >Avg:</text>
<text x="414.68" y="1493.6" font-family="Liberation Mono" font-size="27.31" font-weight="400" fill="#2a2a2a" textLength="84.02" lengthAdjust="spacingAndGlyphs" >67.95m</text>
<text x="522.65" y="1493.8" font-family="Liberation Sans" font-size="26.6" font-weight="400" fill="#2a2a2a" textLength="100.4" lengthAdjust="spacingAndGlyphs" >Count: 8</text>
<text x="1648.26" y="1494.5" font-family="Liberation Sans" font-size="26.74" font-weight="400" fill="#2a2a2a" textLength="101.42" lengthAdjust="spacingAndGlyphs" >9 records</text>
<text x="1832.78" y="1494.5" font-family="Liberation Sans" font-size="26.74" font-weight="400" fill="#2a2a2a" textLength="126.23" lengthAdjust="spacingAndGlyphs" >Page 1 of 1</text>
<rect x="1439" y="1470.3" width="116.3" height="41.3" fill="#ffffff" stroke="#bdbdbd" stroke-width="1.5"/>
<text x="1465.31" y="1499.2" font-family="Liberation Mono" font-size="26.56" font-weight="400" fill="#2a2a2a" textLength="42.13" lengthAdjust="spacingAndGlyphs" >100</text>
<text x="1509.14" y="1499.2" font-family="Liberation Sans" font-size="26.6" font-weight="400" fill="#2a2a2a" textLength="21.53" lengthAdjust="spacingAndGlyphs" >%</text>
<rect x="2057" y="16" width="7.5" height="1504" fill="url(#shl)" />
<rect x="2064.5" y="6" width="624.5" height="1514" fill="#ffffff" />
<rect x="2065.5" y="134" width="619.5" height="1244" fill="#f3f3f3" />
<text x="2161.72" y="100" font-family="Liberation Sans" font-size="45.06" font-weight="400" fill="#333" textLength="286.48" lengthAdjust="spacingAndGlyphs" >Calculated Row</text>
<text x="2098.71" y="196" font-family="Liberation Sans" font-size="27.33" font-weight="400" fill="#2a2a2a" stroke="#2a2a2a" stroke-width="0.45" textLength="49.87" lengthAdjust="spacingAndGlyphs" >Title</text>
<text x="2148.93" y="194.95" font-family="Liberation Sans" font-size="25.81" font-weight="700" fill="#a4262c" textLength="9.8" lengthAdjust="spacingAndGlyphs" >*</text>
<rect x="2099.5" y="220" width="535" height="67" fill="#ffffff" stroke="#e1e1e1" stroke-width="2.6"/>
<text x="2109.51" y="264.1" font-family="Liberation Sans" font-size="27.47" font-weight="400" fill="#333" textLength="224.26" lengthAdjust="spacingAndGlyphs" >Speciality Beverages</text>
<text x="2097.86" y="342" font-family="Liberation Sans" font-size="27.33" font-weight="400" fill="#2a2a2a" stroke="#2a2a2a" stroke-width="0.45" textLength="91.34" lengthAdjust="spacingAndGlyphs" >Formula</text>
<text x="2197.73" y="339.96" font-family="Liberation Sans" font-size="23.92" font-weight="700" fill="#a4262c" textLength="9.7" lengthAdjust="spacingAndGlyphs" >*</text>
<rect x="2099.5" y="369.5" width="535" height="303" fill="#ffffff" stroke="#e1e1e1" stroke-width="2"/>
<rect x="2100.5" y="623" width="533" height="48.5" fill="#f3f3f3" />
<rect x="2100.5" y="622" width="533" height="1.5" fill="#e1e1e1" />
<text x="2108.58" y="406.7" font-family="Liberation Sans" font-size="27.18" font-weight="400" fill="#0078d4" textLength="128.84" lengthAdjust="spacingAndGlyphs" >[Beverages]</text>
<text x="2245.6" y="405.06" font-family="Liberation Sans" font-size="24.22" font-weight="400" fill="#333" textLength="9.69" lengthAdjust="spacingAndGlyphs" >*</text>
<text x="2262.92" y="406.7" font-family="Liberation Mono" font-size="28.38" font-weight="400" fill="#2a9d55" textLength="54.52" lengthAdjust="spacingAndGlyphs" >0.33</text>
<text x="2131.65" y="715.4" font-family="Liberation Sans" font-size="22.67" font-weight="400" fill="#5c5c5c" textLength="496.46" lengthAdjust="spacingAndGlyphs" >Select any row in the table to add to the formula.</text>
<g id="hint2"></g>
<text x="2131.28" y="750.8" font-family="Liberation Sans" font-size="22.67" font-weight="400" fill="#5c5c5c" textLength="39.72" lengthAdjust="spacingAndGlyphs" >Use</text>
<text x="2174.65" y="750.8" font-family="Liberation Sans" font-size="22.67" font-weight="700" fill="#505050" textLength="120.05" lengthAdjust="spacingAndGlyphs" >Ctrl + Space</text>
<text x="2300.66" y="750.8" font-family="Liberation Sans" font-size="22.67" font-weight="400" fill="#5c5c5c" textLength="191.31" lengthAdjust="spacingAndGlyphs" >to open suggestion</text>
<text x="2148.57" y="842.5" font-family="Liberation Sans" font-size="27.03" font-weight="400" fill="#2a2a2a" textLength="265.16" lengthAdjust="spacingAndGlyphs" >Bind for Cross filter/RLS</text>
<text x="2098.41" y="925.9" font-family="Liberation Sans" font-size="27.91" font-weight="400" fill="#2a2a2a" stroke="#2a2a2a" stroke-width="0.45" textLength="153.89" lengthAdjust="spacingAndGlyphs" >Scaling Factor</text>
<text x="2259.92" y="924.3" font-family="Liberation Sans" font-size="25" font-weight="700" fill="#a4262c" textLength="10.1" lengthAdjust="spacingAndGlyphs" >*</text>
<rect x="2099.5" y="949.8" width="535" height="64.7" fill="#ffffff" stroke="#e1e1e1" stroke-width="2"/>
<text x="2121.95" y="991.4" font-family="Liberation Sans" font-size="27.03" font-weight="400" fill="#2a2a2a" textLength="52.11" lengthAdjust="spacingAndGlyphs" >Auto</text>
<path d="M2588.5 971.5 L2600.5 986 L2612.5 971.5" fill="none" stroke="#333" stroke-width="1.8" />
<rect x="2099.8" y="817.5" width="32" height="31.5" fill="#ffffff" stroke="#333" stroke-width="1.6"/>
<rect x="2099.8" y="1063.3" width="32" height="32" fill="#ffffff" stroke="#333" stroke-width="1.6"/>
<rect x="2099.8" y="1165.8" width="32" height="32" fill="#ffffff" stroke="#333" stroke-width="1.6"/>
<rect x="2099" y="1267" width="33.5" height="33.5" fill="#0078d4" />
<path d="M2107 1284 L2113.5 1290.5 L2125 1277.5" fill="none" stroke="#fff" stroke-width="3.2" />
<text x="2147.59" y="1089" font-family="Liberation Sans" font-size="27.03" font-weight="400" fill="#2a2a2a" textLength="168.15" lengthAdjust="spacingAndGlyphs" >Include in total</text>
<text x="2147.69" y="1191.7" font-family="Liberation Sans" font-size="27.03" font-weight="400" fill="#2a2a2a" textLength="187.81" lengthAdjust="spacingAndGlyphs" >Include in Charts</text>
<text x="2148.02" y="1294" font-family="Liberation Sans" font-size="27.03" font-weight="400" fill="#2a2a2a" textLength="340.65" lengthAdjust="spacingAndGlyphs" >Evaluate Columns Before Rows</text>
<clipPath id="dclip"><rect x="2065" y="134" width="624" height="1244"/></clipPath>
<g clip-path="url(#dclip)">
<text x="2096.89" y="1378.5" font-family="Liberation Sans" font-size="27.62" font-weight="400" fill="#2a2a2a" stroke="#2a2a2a" stroke-width="0.45" textLength="128.78" lengthAdjust="spacingAndGlyphs" >Description</text>
</g>
<rect x="2669.5" y="1200" width="15" height="177" fill="#fbfbfb" rx="7" stroke="#ececec" stroke-width="1"/>
<rect x="2669" y="134" width="16" height="1082" fill="#acacac" rx="8"/>
<rect x="2065.5" y="1512.5" width="623.5" height="1" fill="#efefef" />
<rect x="2065.5" y="1378" width="623.5" height="142" fill="#ffffff" />
<rect x="2297" y="1408.4" width="168" height="75.2" fill="#f3f3f3" />
<rect x="2486.4" y="1408.4" width="168.6" height="75.2" fill="#0078d4" />
<text x="2347.66" y="1456" font-family="Liberation Sans" font-size="29.51" font-weight="400" fill="#2a2a2a" stroke="#2a2a2a" stroke-width="0.6" textLength="67.51" lengthAdjust="spacingAndGlyphs" >Close</text>
<text x="2525.89" y="1456" font-family="Liberation Sans" font-size="29.51" font-weight="400" fill="#ffffff" stroke="#ffffff" stroke-width="0.6" textLength="88.33" lengthAdjust="spacingAndGlyphs" >Update</text>
<rect x="41.4" y="115" width="36" height="35.4" fill="none" stroke="#9a9a9a" stroke-width="2"/>
<rect x="41.4" y="126.5" width="36" height="12" fill="#b5d4f1" stroke="#86acd8" stroke-width="2"/>
<path d="M121.60000000000002 124.3 H140.5 M131.10000000000002 115.1 V133.8" fill="none" stroke="#7fa4d3" stroke-width="2.2" />
<path d="M124.0 150.3 L154.20000000000005 120.2" fill="none" stroke="#9a9a9a" stroke-width="2.3" />
<path d="M138.70000000000005 143.2 H157.5" fill="none" stroke="#7fa4d3" stroke-width="2.2" />
<path d="M767.1 124.3 H786 M776.6 115.1 V133.8" fill="none" stroke="#7fa4d3" stroke-width="2.2" />
<path d="M769.5 150.3 L799.7 120.2" fill="none" stroke="#9a9a9a" stroke-width="2.3" />
<path d="M784.2 143.2 H803" fill="none" stroke="#7fa4d3" stroke-width="2.2" />
<path d="M222.6 114.6 H239.5 M218 118.7 H241.5" fill="none" stroke="#333333" stroke-width="2" />
<rect x="214.3" y="123.8" width="27.2" height="26.6" fill="#f4f4f4" stroke="#333333" stroke-width="2"/>
<path d="M244.5 124 V146.5 M248 121 V143" fill="none" stroke="#333333" stroke-width="1.8" />
<rect x="214.3" y="131.5" width="27.2" height="10" fill="#79b4ea" stroke="#1a4fa8" stroke-width="2"/>
<circle cx="248.4" cy="125" r="15.2" fill="#4a79c6" />
<text x="241.87" y="132.5" font-family="Liberation Sans" font-size="22.53" font-weight="700" fill="#ffffff" textLength="11.71" lengthAdjust="spacingAndGlyphs" >1</text>
<path d="M363.9 115.6 L373.3 115.6 L365.9 130.4 L377.6 130.4 L358.2 147.6 L352.2 147.6 L360.8 135 L352.2 135 Z" fill="#79b4ea" stroke="#1a4fa8" stroke-width="2.1" stroke-linejoin="miter"/>
<path d="M471 142.3 H461.5 V114.6 H498.4 V142.3 H495" fill="none" stroke="#333333" stroke-width="2.1" />
<rect x="475" y="124.8" width="16.1" height="25.4" fill="#ffffff" stroke="#333333" stroke-width="2.1"/>
<rect x="478.6" y="128.8" width="8.9" height="3.8" fill="#79b4ea" stroke="#1a4fa8" stroke-width="1.9"/>
<circle cx="479.2" cy="137.2" r="1.1" fill="#333333" />
<circle cx="483.1" cy="137.2" r="1.1" fill="#333333" />
<circle cx="487" cy="137.2" r="1.1" fill="#333333" />
<circle cx="479.2" cy="141.4" r="1.1" fill="#333333" />
<circle cx="483.1" cy="141.4" r="1.1" fill="#333333" />
<circle cx="487" cy="141.4" r="1.1" fill="#333333" />
<circle cx="479.2" cy="145.6" r="1.1" fill="#333333" />
<circle cx="483.1" cy="145.6" r="1.1" fill="#333333" />
<circle cx="487" cy="145.6" r="1.1" fill="#333333" />
<path d="M575.1 113.6 V151.9" fill="none" stroke="#333333" stroke-width="2.4" stroke-dasharray="4.6 4.4"/>
<path d="M556.6 133.3 H570.2 M562.9 126.2 L570.2 133.3 L562.9 140.7" fill="none" stroke="#1a4fa8" stroke-width="2.3" />
<path d="M594.2 133.3 H580.4 M587.7 126.2 L580.4 133.3 L587.7 140.7" fill="none" stroke="#1a4fa8" stroke-width="2.3" />
<path d="M669.1 117 H706.8 M669.1 148.9 H706.8" fill="none" stroke="#333333" stroke-width="2.3" />
<path d="M669.1 132.9 H706.8" fill="none" stroke="#1a4fa8" stroke-width="2.3" />
<circle cx="689.9" cy="132.9" r="5.6" fill="#79b4ea" stroke="#1a4fa8" stroke-width="2.3" />
<path d="M875.5 142.2 H855.9 V114.8 H891.5 V142.2 H882" fill="none" stroke="#333333" stroke-width="2.2" />
<path d="M879 131.6 V150.7 M873.6 131.6 H884.2 M873.6 150.7 H884.2" fill="none" stroke="#1a4fa8" stroke-width="2.4" />
<path d="M980.7 142.7 V114.6 H1009.1 M984.9 147.1 V118.9 H1013.5" fill="none" stroke="#333333" stroke-width="2.2" />
<rect x="989" y="123.1" width="28.2" height="27.7" fill="#f4f4f4" stroke="#333333" stroke-width="2.2"/>
<rect x="997.9" y="123.1" width="10.4" height="27.7" fill="#79b4ea" stroke="#1a4fa8" stroke-width="2.2"/>
<path d="M1124.9 115.6 H1121 Q1116.8 115.6 1116.8 120 V139.7 Q1116.8 144.1 1121 144.1 H1124.9" fill="none" stroke="#333333" stroke-width="2.2" />
<path d="M1135.2 115.6 H1139 Q1143.3 115.6 1143.3 120 V133.4" fill="none" stroke="#333333" stroke-width="2.2" />
<path d="M1123 124 Q1125.5 121.5 1127.5 124.5 L1132 135.5 Q1134 139 1137 136 M1122.5 137 Q1125.5 140 1128 135 L1133 125 Q1135 121.5 1138 123.5" fill="none" stroke="#1a4fa8" stroke-width="2" />
<path d="M1137 144 H1149.6 M1142.9 137.9 V150" fill="none" stroke="#1a4fa8" stroke-width="2.2" />
<path d="M1256.6 113.8 V148.6 H1291" fill="none" stroke="#333333" stroke-width="2.2" />
<path d="M1256.6 138.4 L1264.5 131.4 L1271.1 137.9 L1281.8 123.4 L1290.7 129" fill="none" stroke="#1a4fa8" stroke-width="2.2" />
<rect x="1371.1" y="114.7" width="24.3" height="23.7" fill="#b5d4f1" />
<rect x="1358.8" y="114.7" width="36.6" height="36.2" fill="none" stroke="#9a9a9a" stroke-width="2.2"/>
<path d="M1371.1 114.7 V150.9 M1358.8 138.4 H1395.4" fill="none" stroke="#9a9a9a" stroke-width="2.2" />
<path d="M1432.4 133.4 A12.6 12.6 0 0 1 1457.6 133.4 M1432.4 133.4 A12.6 12.6 0 0 0 1445 146.0" fill="none" stroke="#333333" stroke-width="2.2" />
<path d="M1445 116 V125 M1427.6 133.4 H1437 M1453 133.4 H1462.9 M1445 142 V150.7" fill="none" stroke="#333333" stroke-width="2.2" />
<circle cx="1445" cy="133.4" r="3.8" fill="#79b4ea" stroke="#1a4fa8" stroke-width="2.1" />
<path d="M1449.9 143.3 L1453 146.4 L1460.6 139.1" fill="none" stroke="#1a4fa8" stroke-width="2.1" />
<path d="M1501 118.5 L1504.5 115.5 L1510.5 119.5 L1511 123 L1530 141.5 Q1533 145 1530 148 Q1527 151 1524 148 L1505.5 129.5 L1502 129 L1499 123 Z" fill="none" stroke="#9a9a9a" stroke-width="2.3" stroke-linejoin="round"/>
<path d="M1521 140.5 L1526 145.5" fill="none" stroke="#9a9a9a" stroke-width="2" />
<path d="M1525.5 116.5 Q1519 116 1517 122.5 Q1516.5 127 1516 129 L1502.5 141 Q1499.5 144.5 1502.5 148 Q1506 151 1509.5 147.5 L1521 133.5 Q1524 131.5 1528.5 131.5 Q1534 130 1534 123 L1532.5 119 L1526.5 124 L1523 121.5 L1528 116.5 Z" fill="#f4f4f4" stroke="#7fa4d3" stroke-width="2.3" stroke-linejoin="round"/>
<circle cx="1502.5" cy="145.5" r="1.2" fill="#7fa4d3" />
<path d="M1605 151.1 H1594.8 V114.7 H1614 L1624.5 123.4 V128.1 M1614 114.7 V124.3 H1624.5" fill="none" stroke="#9a9a9a" stroke-width="2" />
<circle cx="1620.5" cy="137.4" r="6.3" fill="none" stroke="#7fa4d3" stroke-width="2" />
<path d="M1615.5 141.6 L1605.6 149.6" fill="none" stroke="#7fa4d3" stroke-width="2" />
<rect x="1715.2" y="116.9" width="23.8" height="23.2" fill="none" stroke="#1a4fa8" stroke-width="2.2"/>
<rect x="1724.1" y="125.3" width="14.9" height="14.8" fill="#79b4ea" />
<rect x="1724.1" y="125.3" width="23.1" height="23.3" fill="none" stroke="#333333" stroke-width="2.2"/>
<path d="M1739 125.3 V140.1 H1724.1" fill="none" stroke="#333333" stroke-width="2.2" />
<path d="M1844.3 127.1 H1839.7 L1850.2 138.7 L1839.7 149.9 H1861.8 V145.6 M1859.3 127.1 H1861.8 V131.4" fill="none" stroke="#333333" stroke-width="2.2" />
<circle cx="1851.9" cy="121.5" r="4.3" fill="none" stroke="#1a4fa8" stroke-width="1.9" />
<path d="M1856.47 123.39 L1858.74 124.33 M1853.79 126.07 L1854.73 128.34 M1850.01 126.07 L1849.07 128.34 M1847.33 123.39 L1845.06 124.33 M1847.33 119.61 L1845.06 118.67 M1850.01 116.93 L1849.07 114.66 M1853.79 116.93 L1854.73 114.66 M1856.47 119.61 L1858.74 118.67 " fill="none" stroke="#1a4fa8" stroke-width="2.2" />
<path d="M1973.7 120 V145 Q1973.7 150.5 1989.6 150.3" fill="none" stroke="#333333" stroke-width="2.2" />
<path d="M1999.5 120 V129.3" fill="none" stroke="#333333" stroke-width="2.2" />
<ellipse cx="1986.6" cy="119.7" rx="12.9" ry="4.6" fill="none" stroke="#333333" stroke-width="2.2"/>
<circle cx="1999.5" cy="141.3" r="11.5" fill="#f4f4f4" />
<circle cx="1999.5" cy="141.3" r="7.1" fill="none" stroke="#1a4fa8" stroke-width="2.3" />
<path d="M2006.84 144.34 L2009.57 145.47 M2002.54 148.64 L2003.67 151.37 M1996.46 148.64 L1995.33 151.37 M1992.16 144.34 L1989.43 145.47 M1992.16 138.26 L1989.43 137.13 M1996.46 133.96 L1995.33 131.23 M2002.54 133.96 L2003.67 131.23 M2006.84 138.26 L2009.57 137.13 " fill="none" stroke="#1a4fa8" stroke-width="2.8" />
<path d="M26.6 310.2 H37.5 A10.3 10.3 0 1 1 28.5 325" fill="none" stroke="#b3b3b3" stroke-width="1.8" />
<path d="M32.4 305.2 L27 310.2 L32.4 315" fill="none" stroke="#b3b3b3" stroke-width="1.8" />
<g transform="translate(0.00 0.00) scale(1)">
<circle cx="94.4" cy="297.8" r="2.3" fill="#1a4fa8"/><circle cx="74.2" cy="324.5" r="2.3" fill="#1a4fa8"/>
<path d="M95.5 296.3 Q92.5 293.4 89.3 295.8 Q86.6 298.2 85.2 304.5 L82.3 318.5 Q80 327.6 75 326.4" fill="none" stroke="#1a4fa8" stroke-width="2.4"/>
<path d="M78.6 306.6 H91.6" stroke="#1a4fa8" stroke-width="1.7"/>
<path d="M93.5 310.8 Q96.5 306.3 99.3 309.8 Q101.2 313 102.6 317.8 Q104.6 322.3 108.3 316.6" fill="none" stroke="#333" stroke-width="2.3"/>
<path d="M107.8 308 L93.8 319.6" stroke="#333" stroke-width="2.1"/><circle cx="107.9" cy="308" r="1.7" fill="#333"/><circle cx="93.8" cy="319.6" r="1.7" fill="#333"/>
</g>
<path d="M145.2 317.6 H156 M145.2 323.8 H156" fill="none" stroke="#222" stroke-width="1.7" />
<rect x="180.3" y="302.7" width="122.2" height="29.5" fill="#ffffff" rx="5.5" stroke="#1e86dd" stroke-width="2"/>
<text x="190.65" y="326.9" font-family="Liberation Sans" font-size="23.98" font-weight="400" fill="#0f6fcf" textLength="102.12" lengthAdjust="spacingAndGlyphs" >Beverages</text>
<text x="309.88" y="329.43" font-family="Liberation Sans" font-size="26.78" font-weight="400" fill="#222" textLength="10.23" lengthAdjust="spacingAndGlyphs" >*</text>
<text x="327.82" y="329.6" font-family="Liberation Mono" font-size="27.31" font-weight="400" fill="#222" textLength="54.62" lengthAdjust="spacingAndGlyphs" >0.33</text>
<path d="M1833 332.5 L1854.5 311.5 M1844 311.5 H1854.5 V322 M1833 322 V332.5 H1843.5" fill="none" stroke="#b8b8b8" stroke-width="1.6" />
<path d="M1914.5 316.5 L1922 325.5 L1937.8 308.5" fill="none" stroke="#bdbdbd" stroke-width="1.6" />
<path d="M1972 308.5 L1990 326.5 M1990 308.5 L1972 326.5" fill="none" stroke="#bdbdbd" stroke-width="1.6" />
<path d="M2038.9 306 L2047.1 314.2 L2042.7 315.9 L2038.6 320 L2038.4 322.7 L2036.7 326.6 L2031.5 321.6 L2026.3 316.4 L2028.7 315 L2033.1 314.8 L2037.5 310.4 Z" fill="#1e1e1e" stroke="#1e1e1e" stroke-width="0.6" stroke-linejoin="round"/>
<path d="M2032 321 L2023.5 329.3" fill="none" stroke="#1e1e1e" stroke-width="2" />
<rect x="56.5" y="547.5" width="25.7" height="26.5" fill="none" stroke="#222" stroke-width="1.9"/>
<rect x="46.3" y="557.5" width="26.7" height="27" fill="#ffffff" stroke="#222" stroke-width="1.9"/>
<path d="M50.5 570 L56 575.5 L68.5 563" fill="none" stroke="#1e86dd" stroke-width="1.8" />
<rect x="50.9" y="644" width="16.3" height="15.9" fill="none" stroke="#3a3a3a" stroke-width="1.5"/>
<path d="M54.5 651.9499999999999 H63.6" fill="none" stroke="#3a3a3a" stroke-width="1.5" />
<rect x="50.9" y="736.2" width="16.3" height="15.9" fill="none" stroke="#3a3a3a" stroke-width="1.5"/>
<path d="M54.5 744.15 H63.6" fill="none" stroke="#3a3a3a" stroke-width="1.5" />
<rect x="50.9" y="890.3" width="16.3" height="15.9" fill="none" stroke="#3a3a3a" stroke-width="1.5"/>
<path d="M54.5 898.25 H63.6" fill="none" stroke="#3a3a3a" stroke-width="1.5" />
<path d="M7.2 692.5 H26 M7.2 700.5 H26 M7.2 708.7 H26" fill="none" stroke="#444" stroke-width="1.3" />
<path d="M341 708 L342 702.5 L354.5 690 Q356.5 688.5 358 690.5 Q359.5 692.5 357.5 694 L345 706.5 Z M351.5 693 L355 696.5" fill="none" stroke="#555" stroke-width="1.3" />
<path d="M649.1 1476 L668.8 1495.5" fill="none" stroke="#222" stroke-width="1.5" />
<path d="M648 1486.7 A12 12 0 0 1 651.8 1479.6 M654.8 1477.6 A12 12 0 0 1 671.9 1486.7" fill="none" stroke="#222" stroke-width="1.5" />
<path d="M659.8 1482.3 A4.8 4.8 0 0 1 664.5 1486.7 M656.5 1484.8 A4.8 4.8 0 0 0 662.5 1489.7" fill="none" stroke="#222" stroke-width="1.5" />
<path d="M1373.06 1483.42 L1377.30 1484.13 L1377.30 1489.27 L1373.06 1489.98 L1371.90 1492.77 L1374.40 1496.27 L1370.77 1499.90 L1367.27 1497.40 L1364.48 1498.56 L1363.77 1502.80 L1358.63 1502.80 L1357.92 1498.56 L1355.13 1497.40 L1351.63 1499.90 L1348.00 1496.27 L1350.50 1492.77 L1349.34 1489.98 L1345.10 1489.27 L1345.10 1484.13 L1349.34 1483.42 L1350.50 1480.63 L1348.00 1477.13 L1351.63 1473.50 L1355.13 1476.00 L1357.92 1474.84 L1358.63 1470.60 L1363.77 1470.60 L1364.48 1474.84 L1367.27 1476.00 L1370.77 1473.50 L1374.40 1477.13 L1371.90 1480.63 Z" fill="#ffffff" stroke="#333" stroke-width="1.5" />
<circle cx="1361.2" cy="1486.7" r="6.5" fill="none" stroke="#1a4fa8" stroke-width="1.6" />
<path d="M1400.8 1488.7 H1421.9" fill="none" stroke="#222" stroke-width="1.8" />
<path d="M1568 1489.3 H1590.1 M1578.8 1478.5 V1500.6" fill="none" stroke="#222" stroke-width="1.8" />
<path d="M1776.2 1476 V1496.4 M1794.6 1477.6 L1784.8 1486.5 L1794.6 1495.4 M1820.6 1477.6 L1810.8 1486.5 L1820.6 1495.4" fill="none" stroke="#a8a8a8" stroke-width="3.2" />
<path d="M1972.3 1477.6 L1982.6 1486.5 L1972.3 1495.4 M1998.5 1477.6 L2008.6 1486.5 L1998.5 1495.4 M2016.3 1476 V1496.4" fill="none" stroke="#a8a8a8" stroke-width="3.2" />
<path d="M2554.5 15.5 L2561.5 22.5 L2555 26 L2553 31 L2545.5 23.5 L2550.5 21.5 Z M2548 28.5 L2544 32.5" fill="none" stroke="#6b6b6b" stroke-width="1.4" stroke-linejoin="round"/>
<path d="M2585.5 18.2 H2602.5 M2588.5 24 H2599.5 M2591.5 30 H2596.5" fill="none" stroke="#6b6b6b" stroke-width="1.6" stroke-linecap="round"/>
<path d="M2632.5 17.3 H2629.5 Q2626.4 17.3 2626.4 20.5 V31.5 Q2626.4 34.5 2629.5 34.5 H2640.5 Q2643.6 34.5 2643.6 31.5 V27.5 M2626.4 26.5 H2630 Q2633.3 26.5 2633.3 29.5 V34.5 M2636.5 24 L2643.3 17.5 M2637.5 17.3 H2643.5 V23.5" fill="none" stroke="#6b6b6b" stroke-width="1.5" />
<circle cx="2669.5" cy="24.2" r="1.5" fill="#6b6b6b" />
<circle cx="2675.5" cy="24.2" r="1.5" fill="#6b6b6b" />
<circle cx="2682" cy="24.2" r="1.5" fill="#6b6b6b" />
<path d="M2117.4 74.4 L2104.5 86.6 L2117.4 98.8" fill="none" stroke="#333" stroke-width="1.8" />
<circle cx="2472.7" cy="82.5" r="10.8" fill="none" stroke="#333" stroke-width="1.5" />
<rect x="2471.9" y="79.5" width="1.6" height="9" fill="#333" />
<rect x="2471.9" y="75.8" width="1.6" height="1.8" fill="#333" />
<path d="M2639 80.5 L2663 104.8 M2663 80.5 L2639 104.8" fill="none" stroke="#333" stroke-width="2.1" />
<path d="M2595.5 342 L2616.5 322.5 M2606.5 322.5 H2616.5 V332.5 M2595.5 332 V342 H2605.5" fill="none" stroke="#333" stroke-width="1.7" />
<g transform="translate(2056.34 380.04) scale(0.86)">
<circle cx="94.4" cy="297.8" r="2.3" fill="#1a4fa8"/><circle cx="74.2" cy="324.5" r="2.3" fill="#1a4fa8"/>
<path d="M95.5 296.3 Q92.5 293.4 89.3 295.8 Q86.6 298.2 85.2 304.5 L82.3 318.5 Q80 327.6 75 326.4" fill="none" stroke="#1a4fa8" stroke-width="2.4"/>
<path d="M78.6 306.6 H91.6" stroke="#1a4fa8" stroke-width="1.7"/>
<path d="M93.5 310.8 Q96.5 306.3 99.3 309.8 Q101.2 313 102.6 317.8 Q104.6 322.3 108.3 316.6" fill="none" stroke="#333" stroke-width="2.3"/>
<path d="M107.8 308 L93.8 319.6" stroke="#333" stroke-width="2.1"/><circle cx="107.9" cy="308" r="1.7" fill="#333"/><circle cx="93.8" cy="319.6" r="1.7" fill="#333"/>
</g>
<path d="M2106.8 716 Q2106.5 711.5 2104 709 Q2102 706.5 2102 703.5 Q2102.2 696.3 2110.1 696.2 Q2118 696.3 2118.2 703.5 Q2118.2 706.5 2116.2 709 Q2113.7 711.5 2113.4 716 Z M2106.8 716 V719 Q2106.8 720.5 2108.3 720.5 H2112 Q2113.4 720.5 2113.4 719 V716" fill="none" stroke="#666" stroke-width="1.5" />
</svg>
</body></html>
